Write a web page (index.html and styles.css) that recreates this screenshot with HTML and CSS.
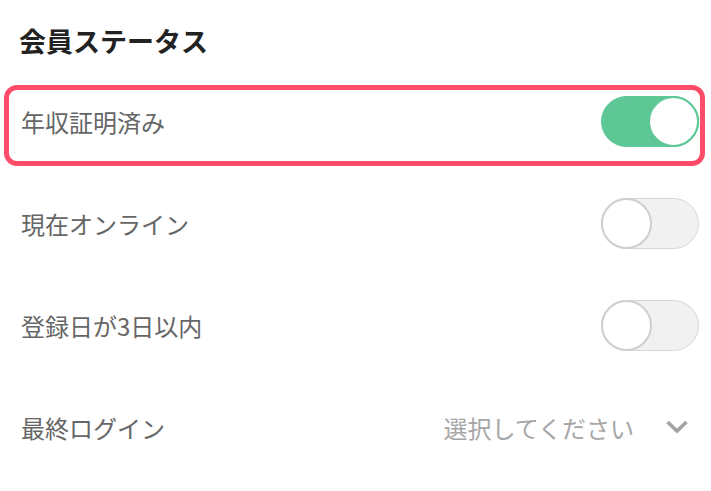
FILE: index.html
```html
<!DOCTYPE html>
<html lang="ja">
<head>
<meta charset="utf-8">
<link rel="stylesheet" href="styles.css">
</head>
<body>
<section class="panel">
  <h2 class="title">会員ステータス</h2>
  <ul class="list">
    <li class="row row--highlight">
      <span class="label">年収証明済み</span>
      <span class="toggle toggle--on"><span class="knob"></span></span>
    </li>
    <li class="row">
      <span class="label">現在オンライン</span>
      <span class="toggle"><span class="knob"></span></span>
    </li>
    <li class="row">
      <span class="label">登録日が3日以内</span>
      <span class="toggle"><span class="knob"></span></span>
    </li>
    <li class="row">
      <span class="label">最終ログイン</span>
      <span class="select">
        <span class="select-text">選択してください</span>
        <svg class="chevron" width="24" height="16" viewBox="0 0 24 16"><path d="M2.5 3 L12 12 L21.5 3" fill="none" stroke="#a3a3a3" stroke-width="3.6"/></svg>
      </span>
    </li>
  </ul>
</section>
</body>
</html>
```
FILE: styles.css
```css
* { box-sizing: border-box; }
html, body { margin: 0; padding: 0; background: #fff; }
body {
  font-family: "Noto Sans CJK JP", "Noto Sans", sans-serif;
  width: 711px;
  height: 491px;
  overflow: hidden;
}
.panel { padding-top: 22px; }
.title {
  margin: 0 0 10px 19px;
  font-size: 27px;
  line-height: 38px;
  font-weight: 700;
  color: #222;
}
.list { list-style: none; margin: 0; padding: 0; }
.row {
  position: relative;
  height: 102px;
  display: flex;
  align-items: center;
  justify-content: space-between;
  padding: 0 12px 0 21px;
}
.row--highlight::after {
  content: "";
  position: absolute;
  left: 4px;
  right: 6px;
  top: 15px;
  bottom: 6px;
  border: 5px solid #ff4c68;
  border-radius: 13px;
  pointer-events: none;
}
.label {
  font-size: 24px;
  color: #666;
  line-height: 32px;
  padding-top: 1px;
}
.toggle {
  position: relative;
  width: 98px;
  height: 51px;
  border-radius: 26px;
  background: #f1f1f1;
  border: 1px solid #d6d6d6;
  display: flex;
  align-items: center;
}
.toggle .knob {
  width: 51px;
  height: 51px;
  margin-left: -1px;
  border-radius: 50%;
  background: #fff;
  border: 2px solid #cfcfcf;
}
.toggle--on {
  background: #5dc796;
  border-color: #5dc796;
  justify-content: flex-end;
}
.toggle--on .knob {
  margin-left: 0;
  margin-right: -1px;
  border-color: #5dc796;
}
.select {
  display: flex;
  align-items: center;
  gap: 31px;
}
.select-text {
  font-size: 24px;
  color: #a6a6a6;
  line-height: 32px;
  padding-top: 1px;
}
.chevron { display: block; margin-right: 10px; }
```
